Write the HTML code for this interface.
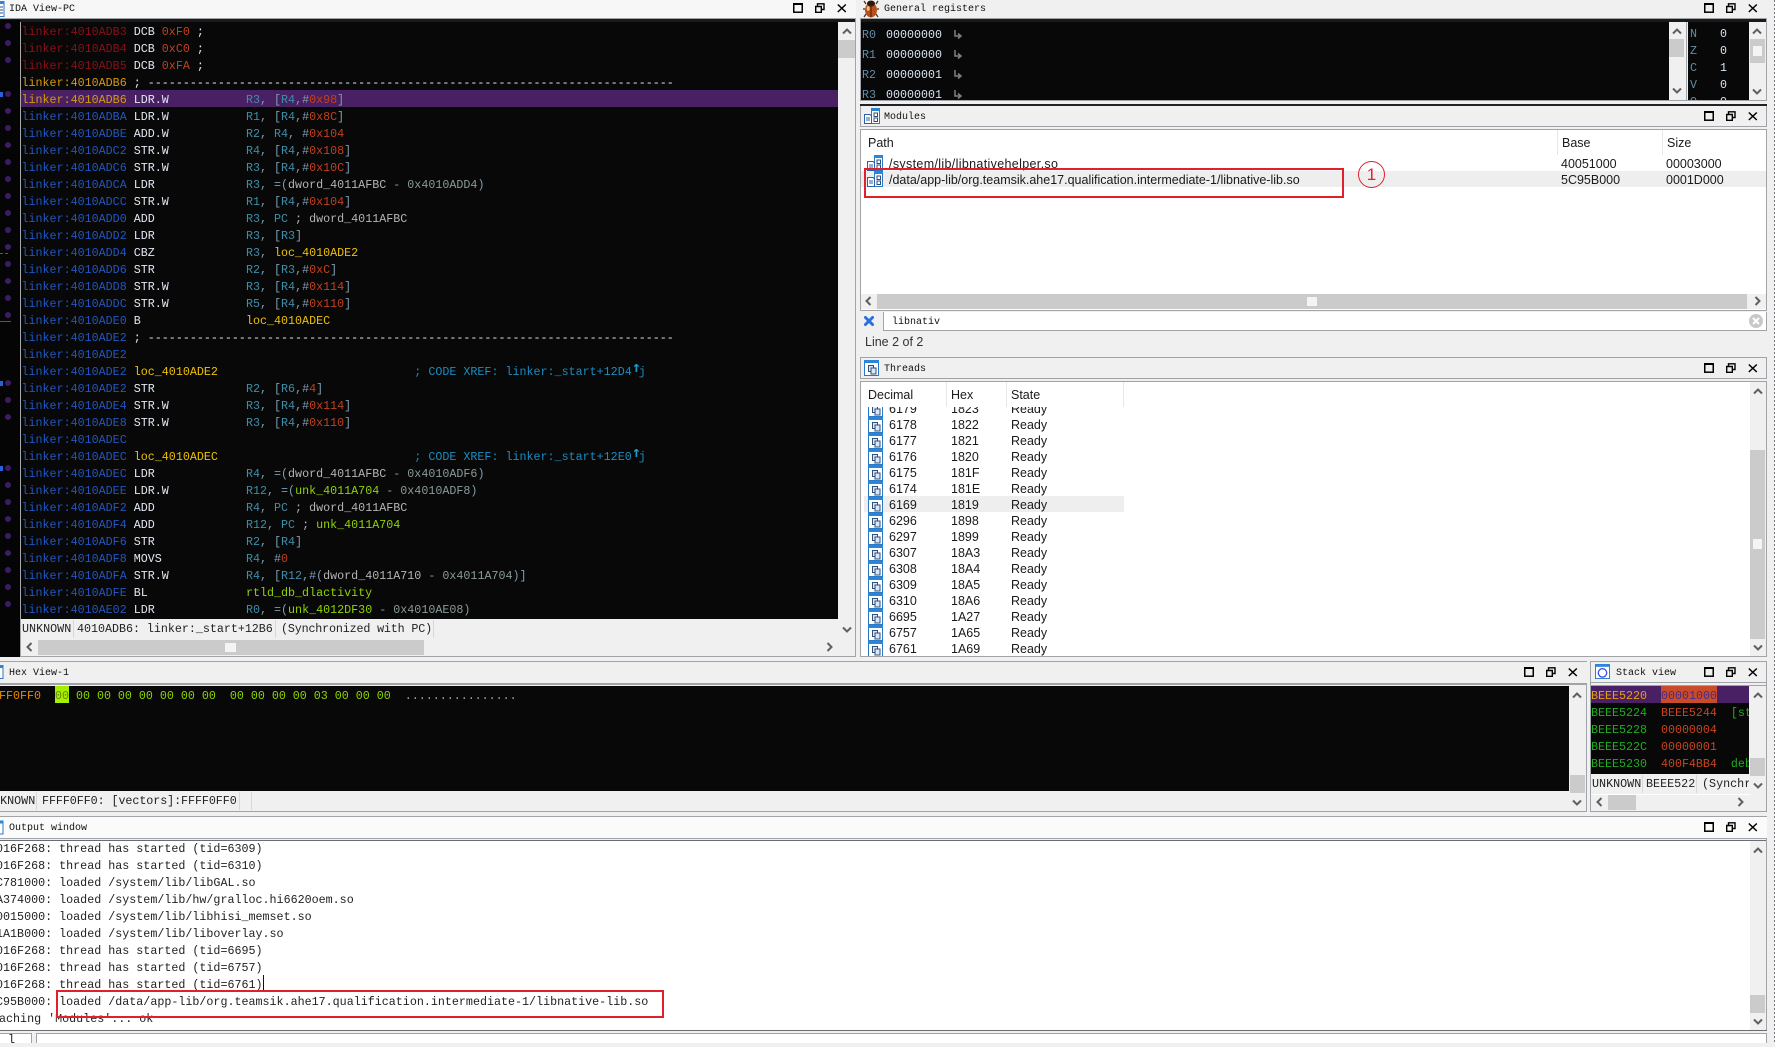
<!DOCTYPE html>
<html><head><meta charset="utf-8"><title>IDA</title>
<style>
html,body{margin:0;padding:0}
body{width:1775px;height:1042px;position:relative;overflow:hidden;background:#f0f0f0;font-family:"Liberation Mono",monospace;font-size:11.67px;color:#111}
.p{position:absolute;display:block}
.k{background:#080808}
.w{background:#fff}
.t{font-size:10px;line-height:12px;white-space:pre;color:#111}
.mono{white-space:pre;line-height:17px}
.lst{color:#e2e8f2;font-size:11.69px}
.lst div{height:17px;white-space:pre;line-height:17px}
i{font-style:normal}
.a{color:#2256c0}.ar{color:#8a1018}.ay{color:#d89a0c}.g{color:#3d8ea8}.b{color:#7f9bb0}.n{color:#c2401e}.l{color:#eec000}.c{color:#1c8cc0}.d{color:#b4b4b4}.u{color:#8fd400}.e{color:#8a9a9a}
.up{display:inline-block;width:7px;line-height:0;font-size:15px;font-family:"DejaVu Sans Mono",monospace;font-weight:bold;position:relative;top:-3px;color:#1c9cd0}
.s{font-family:"Liberation Sans",sans-serif;font-size:12.5px;line-height:16px;white-space:pre;color:#1a1a1a}
.st{line-height:20px;white-space:pre;color:#222;font-size:11.72px}
.ln{background:#a0a4a8}
.dot{position:absolute;width:6px;height:6px;border-radius:3px;background:#3c1c64;left:5px}
.tr{position:relative;height:16px}
.tr svg{position:absolute;left:4px;top:0;width:16px;height:16px}
.tr span{position:absolute;top:0}
.tr span:nth-of-type(1){left:25px}.tr span:nth-of-type(2){left:87px}.tr span:nth-of-type(3){left:147px}
.o{font-size:11.7px}
.o div{height:17px;line-height:17px;white-space:pre;color:#222}
svg.p{overflow:visible}
</style></head>
<body>
<svg width="0" height="0" style="position:absolute">
<defs>
<symbol id="btn" viewBox="0 0 56 10"><rect x=".75" y="1" width="8.5" height="8.2" fill="none" stroke="#000" stroke-width="1.5"/><rect x="0" y="0" width="10" height="2" fill="#000"/><path d="M24.5 3V.8H31V6.5H29M22.7 3.5H28.3V9.3H22.7Z" fill="none" stroke="#000" stroke-width="1.4"/><path d="M44.8 1.5L52.8 9M52.8 1.5L44.8 9" stroke="#000" stroke-width="1.5" fill="none"/></symbol>
<symbol id="up" viewBox="0 0 10 8"><path d="M1 6.5L5 2.5L9 6.5" fill="none" stroke="#606060" stroke-width="2"/></symbol>
<symbol id="dn" viewBox="0 0 10 8"><path d="M1 1.5L5 5.5L9 1.5" fill="none" stroke="#606060" stroke-width="2"/></symbol>
<symbol id="lf" viewBox="0 0 8 10"><path d="M6.5 1L2.5 5L6.5 9" fill="none" stroke="#606060" stroke-width="2"/></symbol>
<symbol id="rt" viewBox="0 0 8 10"><path d="M1.5 1L5.5 5L1.5 9" fill="none" stroke="#606060" stroke-width="2"/></symbol>
<symbol id="th" viewBox="0 0 16 16"><rect x=".5" y=".5" width="14" height="15" fill="#fff" stroke="#2a78c8"/><rect x="0" y="0" width="15" height="3" fill="#2a86d8"/><rect x="4.5" y="5.5" width="5" height="6" fill="#dce8f4" stroke="#2c4f80"/><rect x="7" y="8" width="5" height="6" fill="#dce8f4" stroke="#2c4f80"/></symbol>
<symbol id="mo" viewBox="0 0 16 16"><rect x="7.5" y=".5" width="8" height="15" fill="#fff" stroke="#2a78c8"/><rect x="7" y="0" width="9" height="3" fill="#2a86d8"/><rect x="10" y="5" width="3.5" height="3.5" fill="#fff" stroke="#2c4f80"/><rect x="10" y="10" width="3.5" height="3.5" fill="#fff" stroke="#2c4f80"/><path d="M.5 6.5H6L7.5 8V15.5H.5Z" fill="#fff" stroke="#2a60a8"/><path d="M2 10H6M2 12H6" stroke="#2a60a8"/></symbol>
</defs></svg>

<!-- IDA title -->
<div class="p" style="left:0;top:0;width:856px;height:18px;background:#f7f7f7"></div>
<svg class="p" viewBox="0 0 5 16" style="left:0;top:1px;width:5px;height:16px"><rect x="-8" y=".5" width="12" height="15" fill="#fff" stroke="#2a78c8"/><rect x="-8" y="0" width="12" height="3" fill="#2a86d8"/><path d="M0 6H3M0 9H3M0 12H3" stroke="#2c4f80"/></svg>
<div class="p t" style="left:9px;top:4px">IDA View-PC</div>
<svg class="p" style="left:793px;top:3px;width:56px;height:10px"><use href="#btn"/></svg>
<div class="p ln" style="left:0;top:18px;width:856px;height:1px"></div>
<div class="p" style="left:0;top:19px;width:856px;height:3px;background:#1a1a1a"></div>

<!-- Gutter -->
<div class="p" style="left:0;top:20px;width:20px;height:637px;background:#050505"></div>
<div class="p" style="left:20px;top:22px;width:1px;height:635px;background:#a8a8a8"></div>
<div class="dot" style="top:23px"></div><div class="dot" style="top:40px"></div><div class="dot" style="top:57px"></div>
<div class="dot" style="top:91px"></div><div class="dot" style="top:108px"></div><div class="dot" style="top:125px"></div><div class="dot" style="top:142px"></div><div class="dot" style="top:159px"></div><div class="dot" style="top:176px"></div><div class="dot" style="top:193px"></div><div class="dot" style="top:210px"></div><div class="dot" style="top:227px"></div><div class="dot" style="top:244px"></div><div class="dot" style="top:261px"></div><div class="dot" style="top:278px"></div><div class="dot" style="top:295px"></div><div class="dot" style="top:312px"></div>
<div class="dot" style="top:380px"></div><div class="dot" style="top:397px"></div><div class="dot" style="top:414px"></div>
<div class="dot" style="top:465px"></div><div class="dot" style="top:482px"></div><div class="dot" style="top:499px"></div><div class="dot" style="top:516px"></div><div class="dot" style="top:533px"></div><div class="dot" style="top:550px"></div><div class="dot" style="top:567px"></div><div class="dot" style="top:584px"></div><div class="dot" style="top:601px"></div>
<div class="p" style="left:0;top:92px;width:3px;height:5px;background:#2860e0"></div>
<div class="p" style="left:0;top:381px;width:3px;height:5px;background:#2860e0"></div>
<div class="p" style="left:0;top:466px;width:3px;height:5px;background:#2860e0"></div>
<div class="p" style="left:0;top:253px;width:10px;height:1px;background:repeating-linear-gradient(90deg,#2060c0 0 3px,transparent 3px 5px)"></div>
<div class="p" style="left:0;top:321px;width:11px;height:1px;background:#2060c0"></div>

<!-- Listing -->
<div class="p k" style="left:21px;top:22px;width:817px;height:597px"></div>
<div class="p" style="left:21px;top:90px;width:817px;height:17px;background:#4a2064"></div>
<div class="p lst" style="left:21.5px;top:24px;width:816px;height:595px;overflow:hidden">
<div><i class="ar">linker:4010ADB3</i> DCB <i class="n">0xF0</i> ;</div>
<div><i class="ar">linker:4010ADB4</i> DCB <i class="n">0xC0</i> ;</div>
<div><i class="ar">linker:4010ADB5</i> DCB <i class="n">0xFA</i> ;</div>
<div><i class="ay">linker:4010ADB6</i> ; ---------------------------------------------------------------------------</div>
<div><i class="ay">linker:4010ADB6</i> LDR.W           <i class="g">R3</i><i class="b">, [</i><i class="g">R4</i><i class="b">,#</i><i class="n">0x98</i><i class="b">]</i></div>
<div><i class="a">linker:4010ADBA</i> LDR.W           <i class="g">R1</i><i class="b">, [</i><i class="g">R4</i><i class="b">,#</i><i class="n">0x8C</i><i class="b">]</i></div>
<div><i class="a">linker:4010ADBE</i> ADD.W           <i class="g">R2</i><i class="b">, </i><i class="g">R4</i><i class="b">, #</i><i class="n">0x104</i></div>
<div><i class="a">linker:4010ADC2</i> STR.W           <i class="g">R4</i><i class="b">, [</i><i class="g">R4</i><i class="b">,#</i><i class="n">0x108</i><i class="b">]</i></div>
<div><i class="a">linker:4010ADC6</i> STR.W           <i class="g">R3</i><i class="b">, [</i><i class="g">R4</i><i class="b">,#</i><i class="n">0x10C</i><i class="b">]</i></div>
<div><i class="a">linker:4010ADCA</i> LDR             <i class="g">R3</i><i class="b">, =(</i><i class="d">dword_4011AFBC</i><i class="b"> - </i><i class="e">0x4010ADD4</i><i class="b">)</i></div>
<div><i class="a">linker:4010ADCC</i> STR.W           <i class="g">R1</i><i class="b">, [</i><i class="g">R4</i><i class="b">,#</i><i class="n">0x104</i><i class="b">]</i></div>
<div><i class="a">linker:4010ADD0</i> ADD             <i class="g">R3</i><i class="b">, </i><i class="g">PC</i><i class="d"> ; dword_4011AFBC</i></div>
<div><i class="a">linker:4010ADD2</i> LDR             <i class="g">R3</i><i class="b">, [</i><i class="g">R3</i><i class="b">]</i></div>
<div><i class="a">linker:4010ADD4</i> CBZ             <i class="g">R3</i><i class="b">, </i><i class="l">loc_4010ADE2</i></div>
<div><i class="a">linker:4010ADD6</i> STR             <i class="g">R2</i><i class="b">, [</i><i class="g">R3</i><i class="b">,#</i><i class="n">0xC</i><i class="b">]</i></div>
<div><i class="a">linker:4010ADD8</i> STR.W           <i class="g">R3</i><i class="b">, [</i><i class="g">R4</i><i class="b">,#</i><i class="n">0x114</i><i class="b">]</i></div>
<div><i class="a">linker:4010ADDC</i> STR.W           <i class="g">R5</i><i class="b">, [</i><i class="g">R4</i><i class="b">,#</i><i class="n">0x110</i><i class="b">]</i></div>
<div><i class="a">linker:4010ADE0</i> B               <i class="l">loc_4010ADEC</i></div>
<div><i class="a">linker:4010ADE2</i> ; ---------------------------------------------------------------------------</div>
<div><i class="a">linker:4010ADE2</i></div>
<div><i class="a">linker:4010ADE2</i> <i class="l">loc_4010ADE2</i>                            <i class="c">; CODE XREF: linker:_start+12D4</i><i class="up">↑</i><i class="c">j</i></div>
<div><i class="a">linker:4010ADE2</i> STR             <i class="g">R2</i><i class="b">, [</i><i class="g">R6</i><i class="b">,#</i><i class="n">4</i><i class="b">]</i></div>
<div><i class="a">linker:4010ADE4</i> STR.W           <i class="g">R3</i><i class="b">, [</i><i class="g">R4</i><i class="b">,#</i><i class="n">0x114</i><i class="b">]</i></div>
<div><i class="a">linker:4010ADE8</i> STR.W           <i class="g">R3</i><i class="b">, [</i><i class="g">R4</i><i class="b">,#</i><i class="n">0x110</i><i class="b">]</i></div>
<div><i class="a">linker:4010ADEC</i></div>
<div><i class="a">linker:4010ADEC</i> <i class="l">loc_4010ADEC</i>                            <i class="c">; CODE XREF: linker:_start+12E0</i><i class="up">↑</i><i class="c">j</i></div>
<div><i class="a">linker:4010ADEC</i> LDR             <i class="g">R4</i><i class="b">, =(</i><i class="d">dword_4011AFBC</i><i class="b"> - </i><i class="e">0x4010ADF6</i><i class="b">)</i></div>
<div><i class="a">linker:4010ADEE</i> LDR.W           <i class="g">R12</i><i class="b">, =(</i><i class="u">unk_4011A704</i><i class="b"> - </i><i class="e">0x4010ADF8</i><i class="b">)</i></div>
<div><i class="a">linker:4010ADF2</i> ADD             <i class="g">R4</i><i class="b">, </i><i class="g">PC</i><i class="d"> ; dword_4011AFBC</i></div>
<div><i class="a">linker:4010ADF4</i> ADD             <i class="g">R12</i><i class="b">, </i><i class="g">PC</i><i class="d"> ; </i><i class="u">unk_4011A704</i></div>
<div><i class="a">linker:4010ADF6</i> STR             <i class="g">R2</i><i class="b">, [</i><i class="g">R4</i><i class="b">]</i></div>
<div><i class="a">linker:4010ADF8</i> MOVS            <i class="g">R4</i><i class="b">, #</i><i class="n">0</i></div>
<div><i class="a">linker:4010ADFA</i> STR.W           <i class="g">R4</i><i class="b">, [</i><i class="g">R12</i><i class="b">,#(</i><i class="d">dword_4011A710</i><i class="b"> - </i><i class="e">0x4011A704</i><i class="b">)]</i></div>
<div><i class="a">linker:4010ADFE</i> BL              <i class="u">rtld_db_dlactivity</i></div>
<div><i class="a">linker:4010AE02</i> LDR             <i class="g">R0</i><i class="b">, =(</i><i class="u">unk_4012DF30</i><i class="b"> - </i><i class="e">0x4010AE08</i><i class="b">)</i></div>
</div>

<!-- IDA scrollbar -->
<div class="p" style="left:838px;top:22px;width:17px;height:617px;background:#f0f0f0"></div>
<svg class="p" style="left:842px;top:27px;width:10px;height:8px"><use href="#up"/></svg>
<div class="p" style="left:838px;top:40px;width:17px;height:18px;background:#cbcbcb"></div>
<svg class="p" style="left:842px;top:626px;width:10px;height:8px"><use href="#dn"/></svg>
<!-- IDA status -->
<div class="p st" style="left:22px;top:619px;height:20px">UNKNOWN</div>
<div class="p" style="left:73px;top:620px;width:1px;height:18px;background:#d8d8d8"></div>
<div class="p st" style="left:77px;top:619px;letter-spacing:-.04px">4010ADB6: linker:_start+12B6</div>
<div class="p" style="left:275px;top:620px;width:1px;height:18px;background:#d8d8d8"></div>
<div class="p st" style="left:281px;top:619px;letter-spacing:-.17px">(Synchronized with PC)</div>
<div class="p" style="left:433px;top:620px;width:1px;height:18px;background:#d8d8d8"></div>
<!-- IDA h-scroll -->
<div class="p" style="left:38px;top:640px;width:386px;height:15px;background:#cbcbcb"></div>
<div class="p" style="left:225px;top:643px;width:11px;height:9px;background:#f4f4f4"></div>
<svg class="p" style="left:25px;top:642px;width:8px;height:10px"><use href="#lf"/></svg>
<svg class="p" style="left:826px;top:642px;width:8px;height:10px"><use href="#rt"/></svg>
<div class="p ln" style="left:21px;top:656px;width:835px;height:1px"></div>
<div class="p ln" style="left:855px;top:18px;width:1px;height:639px"></div>

<!-- Hex View -->
<div class="p ln" style="left:0;top:661px;width:1587px;height:1px"></div>
<svg class="p" viewBox="0 0 4 14" style="left:0;top:665px;width:4px;height:14px"><rect x="-8" y=".5" width="11" height="13" fill="#fff" stroke="#2a78c8"/><rect x="-8" y="0" width="11" height="3" fill="#2a86d8"/></svg>
<div class="p t" style="left:9px;top:668px">Hex View-1</div>
<svg class="p" style="left:1524px;top:667px;width:56px;height:10px"><use href="#btn"/></svg>
<div class="p ln" style="left:0;top:683px;width:1587px;height:2px"></div>
<div class="p k" style="left:0;top:686px;width:1569px;height:105px"></div>
<div class="p" style="left:55px;top:686px;width:14px;height:17px;background:#a4f000"></div>
<div class="p mono" style="left:-15px;top:688px;color:#8fd400"><i style="color:#e48a00">FFFF0FF0</i>  <i style="color:#6a8a00">00</i> 00 00 00 00 00 00 00  00 00 00 00 03 00 00 00  <i style="color:#a0a8a8">................</i></div>
<div class="p" style="left:1569px;top:686px;width:16px;height:125px;background:#f0f0f0"></div>
<svg class="p" style="left:1572px;top:691px;width:10px;height:8px"><use href="#up"/></svg>
<div class="p" style="left:1570px;top:775px;width:15px;height:18px;background:#cbcbcb"></div>
<svg class="p" style="left:1572px;top:799px;width:10px;height:8px"><use href="#dn"/></svg>
<div class="p st" style="left:-14px;top:791px">UNKNOWN</div>
<div class="p" style="left:36px;top:792px;width:1px;height:18px;background:#d8d8d8"></div>
<div class="p st" style="left:42px;top:791px;letter-spacing:-.08px">FFFF0FF0: [vectors]:FFFF0FF0</div>
<div class="p" style="left:239px;top:792px;width:1px;height:18px;background:#d8d8d8"></div>
<div class="p" style="left:251px;top:792px;width:1px;height:18px;background:#d8d8d8"></div>
<div class="p ln" style="left:0;top:811px;width:1587px;height:1px"></div>
<div class="p ln" style="left:1586px;top:685px;width:1px;height:127px"></div>

<!-- Stack view -->
<div class="p ln" style="left:1590px;top:661px;width:177px;height:1px"></div>
<div class="p ln" style="left:1590px;top:661px;width:1px;height:151px"></div>
<div class="p ln" style="left:1766px;top:661px;width:1px;height:151px"></div>
<svg class="p" viewBox="0 0 16 16" style="left:1595px;top:664px;width:15px;height:15px"><rect x=".5" y=".5" width="15" height="15" fill="#fff" stroke="#2a78c8"/><rect x="0" y="0" width="16" height="3" fill="#2a86d8"/><circle cx="8" cy="9.5" r="4.5" fill="#fff" stroke="#3a50e8" stroke-width="1.4"/></svg>
<div class="p t" style="left:1616px;top:668px">Stack view</div>
<svg class="p" style="left:1704px;top:667px;width:56px;height:10px"><use href="#btn"/></svg>
<div class="p ln" style="left:1590px;top:682px;width:177px;height:1px"></div>
<div class="p ln" style="left:1590px;top:685px;width:177px;height:1px"></div>
<div class="p k" style="left:1591px;top:686px;width:158px;height:88px"></div>
<div class="p" style="left:1591px;top:686px;width:158px;height:17px;background:#4a2064"></div>
<div class="p" style="left:1661px;top:686px;width:56px;height:17px;background:#c84c2c"></div>
<div class="p mono" style="left:1591px;top:688px;width:158px;height:86px;overflow:hidden;color:#1fae1f"><i style="color:#e8a010">BEEE5220</i>  <i style="color:#4a2a80">00001000</i>
BEEE5224  <i style="color:#c8451f">BEEE5244</i>  [stack]
BEEE5228  <i style="color:#c8451f">00000004</i>
BEEE522C  <i style="color:#c8451f">00000001</i>
BEEE5230  <i style="color:#c8451f">400F4BB4</i>  debug</div>
<div class="p" style="left:1750px;top:686px;width:16px;height:124px;background:#f0f0f0"></div>
<svg class="p" style="left:1753px;top:691px;width:10px;height:8px"><use href="#up"/></svg>
<div class="p" style="left:1750px;top:758px;width:15px;height:18px;background:#cbcbcb"></div>
<svg class="p" style="left:1753px;top:782px;width:10px;height:8px"><use href="#dn"/></svg>
<div class="p st" style="left:1592px;top:774px">UNKNOWN</div>
<div class="p" style="left:1642px;top:775px;width:1px;height:18px;background:#d8d8d8"></div>
<div class="p st" style="left:1646px;top:774px">BEEE522</div>
<div class="p" style="left:1696px;top:775px;width:1px;height:18px;background:#d8d8d8"></div>
<div class="p st" style="left:1702px;top:774px;width:47px;overflow:hidden">(Synchr</div>
<div class="p w" style="left:1591px;top:794px;width:159px;height:1px"></div>
<div class="p" style="left:1608px;top:795px;width:28px;height:15px;background:#cbcbcb"></div>
<svg class="p" style="left:1595px;top:797px;width:8px;height:10px"><use href="#lf"/></svg>
<svg class="p" style="left:1737px;top:797px;width:8px;height:10px"><use href="#rt"/></svg>
<div class="p ln" style="left:1590px;top:811px;width:177px;height:1px"></div>

<!-- Output -->
<div class="p ln" style="left:0;top:816px;width:1767px;height:1px"></div>
<div class="p" style="left:0;top:817px;width:1767px;height:21px;background:#fbfbfb"></div>
<svg class="p" viewBox="0 0 4 14" style="left:0;top:820px;width:4px;height:15px"><rect x="-8" y=".5" width="11" height="13" fill="#fff" stroke="#2a78c8"/><rect x="-8" y="0" width="11" height="3" fill="#2a86d8"/></svg>
<div class="p t" style="left:9px;top:823px">Output window</div>
<svg class="p" style="left:1704px;top:822px;width:56px;height:10px"><use href="#btn"/></svg>
<div class="p ln" style="left:0;top:838px;width:1767px;height:1px"></div>
<div class="p" style="left:0;top:840px;width:1767px;height:1px;background:#6a6e72"></div>
<div class="p w" style="left:0;top:841px;width:1750px;height:189px"></div>
<div class="p o" style="left:0;top:841px;width:1750px;height:189px;overflow:hidden">
<div style="margin-left:-11px">4016F268: thread has started (tid=6309)</div>
<div style="margin-left:-11px">4016F268: thread has started (tid=6310)</div>
<div style="margin-left:-11px">5C781000: loaded /system/lib/libGAL.so</div>
<div style="margin-left:-11px">5A374000: loaded /system/lib/hw/gralloc.hi6620oem.so</div>
<div style="margin-left:-11px">40015000: loaded /system/lib/libhisi_memset.so</div>
<div style="margin-left:-11px">41A1B000: loaded /system/lib/liboverlay.so</div>
<div style="margin-left:-11px">4016F268: thread has started (tid=6695)</div>
<div style="margin-left:-11px">4016F268: thread has started (tid=6757)</div>
<div style="margin-left:-11px">4016F268: thread has started (tid=6761)</div>
<div style="margin-left:-11px">5C95B000: loaded /data/app-lib/org.teamsik.ahe17.qualification.intermediate-1/libnative-lib.so</div>
<div style="margin-left:-8px">Caching 'Modules'... ok</div>
</div>
<div class="p" style="left:263px;top:975px;width:1px;height:17px;background:#111"></div>
<div class="p" style="left:56px;top:990px;width:604px;height:24px;border:2px solid #e0202c"></div>
<div class="p" style="left:1750px;top:841px;width:16px;height:189px;background:#f0f0f0"></div>
<svg class="p" style="left:1753px;top:846px;width:10px;height:8px"><use href="#up"/></svg>
<div class="p" style="left:1750px;top:995px;width:15px;height:18px;background:#cbcbcb"></div>
<svg class="p" style="left:1753px;top:1018px;width:10px;height:8px"><use href="#dn"/></svg>
<div class="p ln" style="left:1766px;top:838px;width:1px;height:192px"></div>
<div class="p" style="left:0;top:1030px;width:1767px;height:1px;background:#6a6e72"></div>
<!-- Input -->
<div class="p w" style="left:0;top:1033px;width:31px;height:9px;border-right:1px solid #a0a4a8;border-top:1px solid #a0a4a8"></div>
<div class="p st" style="left:8px;top:1034px;line-height:12px">l</div>
<div class="p w" style="left:36px;top:1033px;width:1729px;height:9px;border:1px solid #a0a4a8;border-bottom:0"></div>

<!-- General registers -->
<svg class="p" viewBox="0 0 16 18" style="left:863px;top:0;width:16px;height:18px"><path d="M3 4L1 1M13 4L15 1M2 9H0M14 9H16M3 14L1 17M13 14L15 17" stroke="#4a2a10" stroke-width="1.2" fill="none"/><ellipse cx="8" cy="10" rx="6" ry="7.5" fill="#b8501c"/><ellipse cx="8" cy="3.5" rx="4" ry="3" fill="#2a1a10"/><path d="M8 4V17" stroke="#4a1a08"/><ellipse cx="5.2" cy="8.5" rx="1.5" ry="2.5" fill="#f0c080"/></svg>
<div class="p t" style="left:884px;top:4px">General registers</div>
<svg class="p" style="left:1704px;top:3px;width:56px;height:10px"><use href="#btn"/></svg>
<div class="p ln" style="left:860px;top:18px;width:907px;height:1px"></div>
<div class="p" style="left:860px;top:19px;width:907px;height:3px;background:#1a1a1a"></div>
<div class="p k" style="left:861px;top:22px;width:808px;height:78px"></div>
<div class="p" style="left:1669px;top:22px;width:17px;height:78px;background:#f0f0f0"></div>
<svg class="p" style="left:1672px;top:27px;width:10px;height:8px"><use href="#up"/></svg>
<div class="p" style="left:1669px;top:39px;width:15px;height:18px;background:#cbcbcb"></div>
<svg class="p" style="left:1672px;top:87px;width:10px;height:8px"><use href="#dn"/></svg>
<div class="p" style="left:1686px;top:22px;width:1px;height:78px;background:#a0a4a8"></div>
<div class="p k" style="left:1688px;top:22px;width:61px;height:78px"></div>
<div class="p" style="left:1749px;top:22px;width:17px;height:78px;background:#f0f0f0"></div>
<svg class="p" style="left:1752px;top:27px;width:10px;height:8px"><use href="#up"/></svg>
<div class="p" style="left:1750px;top:39px;width:15px;height:24px;background:#cbcbcb"></div>
<div class="p" style="left:1753px;top:46px;width:9px;height:10px;background:#f4f4f4"></div>
<svg class="p" style="left:1752px;top:88px;width:10px;height:8px"><use href="#dn"/></svg>
<div class="p" style="left:862px;top:22px;width:120px;height:78px;overflow:hidden;color:#d8e4f0;white-space:pre">
<div class="p" style="top:5px;line-height:17px"><i style="color:#5f8ea8">R0</i> <i style="margin-left:3px">00000000</i></div>
<div class="p" style="top:25px;line-height:17px"><i style="color:#5f8ea8">R1</i> <i style="margin-left:3px">00000000</i></div>
<div class="p" style="top:45px;line-height:17px"><i style="color:#5f8ea8">R2</i> <i style="margin-left:3px">00000001</i></div>
<div class="p" style="top:65px;line-height:17px"><i style="color:#5f8ea8">R3</i> <i style="margin-left:3px">00000001</i></div>
</div>
<svg class="p" viewBox="0 0 9 10" style="left:953px;top:30px;width:9px;height:10px"><path d="M2 0V6H7M5 3.5L8 6L5 8.5" fill="none" stroke="#808080" stroke-width="1.5"/></svg>
<svg class="p" viewBox="0 0 9 10" style="left:953px;top:50px;width:9px;height:10px"><path d="M2 0V6H7M5 3.5L8 6L5 8.5" fill="none" stroke="#808080" stroke-width="1.5"/></svg>
<svg class="p" viewBox="0 0 9 10" style="left:953px;top:70px;width:9px;height:10px"><path d="M2 0V6H7M5 3.5L8 6L5 8.5" fill="none" stroke="#808080" stroke-width="1.5"/></svg>
<svg class="p" viewBox="0 0 9 10" style="left:953px;top:90px;width:9px;height:10px"><path d="M2 0V6H7M5 3.5L8 6L5 8.5" fill="none" stroke="#808080" stroke-width="1.5"/></svg>
<div class="p" style="left:1688px;top:22px;width:61px;height:78px;overflow:hidden;color:#d8e4f0">
<div class="p" style="left:2px;top:4px;line-height:17px;color:#5f8ea8;white-space:pre">N
Z
C
V
Q</div>
<div class="p" style="left:32px;top:4px;line-height:17px;white-space:pre">0
0
1
0
0</div>
</div>
<div class="p ln" style="left:860px;top:100px;width:907px;height:1px"></div>
<div class="p" style="left:860px;top:104px;width:907px;height:2px;background:#222"></div>
<div class="p ln" style="left:860px;top:18px;width:1px;height:83px"></div>
<div class="p ln" style="left:1766px;top:18px;width:1px;height:83px"></div>

<!-- Modules -->
<svg class="p" style="left:864px;top:108px;width:16px;height:16px"><use href="#mo"/></svg>
<div class="p t" style="left:884px;top:112px">Modules</div>
<svg class="p" style="left:1704px;top:111px;width:56px;height:10px"><use href="#btn"/></svg>
<div class="p ln" style="left:860px;top:126px;width:907px;height:1px"></div>
<div class="p ln" style="left:860px;top:129px;width:907px;height:1px"></div>
<div class="p ln" style="left:860px;top:106px;width:1px;height:21px"></div>
<div class="p ln" style="left:1766px;top:106px;width:1px;height:21px"></div>
<div class="p w" style="left:861px;top:130px;width:905px;height:180px"></div>
<div class="p" style="left:1557px;top:130px;width:1px;height:25px;background:#e6e6e6"></div>
<div class="p" style="left:1662px;top:130px;width:1px;height:25px;background:#e6e6e6"></div>
<div class="p" style="left:861px;top:171px;width:905px;height:16px;background:#eeeeee"></div>
<div class="p s" style="left:868px;top:135px">Path</div>
<div class="p s" style="left:1562px;top:135px">Base</div>
<div class="p s" style="left:1667px;top:135px">Size</div>
<svg class="p" style="left:867px;top:155px;width:16px;height:16px"><use href="#mo"/></svg>
<svg class="p" style="left:867px;top:171px;width:16px;height:16px"><use href="#mo"/></svg>
<div class="p s" style="left:889px;top:156px;letter-spacing:.34px">/system/lib/libnativehelper.so</div>
<div class="p s" style="left:889px;top:172px">/data/app-lib/org.teamsik.ahe17.qualification.intermediate-1/libnative-lib.so</div>
<div class="p s" style="left:1561px;top:156px">40051000</div>
<div class="p s" style="left:1666px;top:156px">00003000</div>
<div class="p s" style="left:1561px;top:172px">5C95B000</div>
<div class="p s" style="left:1666px;top:172px">0001D000</div>
<div class="p" style="left:864px;top:168px;width:476px;height:26px;border:2px solid #e0202c"></div>
<div class="p" style="left:1358px;top:161px;width:25px;height:25px;border:1px solid #e0202c;border-radius:50%;text-align:center;line-height:25px;color:#e0202c;font-family:'Liberation Sans',sans-serif;font-size:17px">1</div>
<div class="p" style="left:861px;top:294px;width:905px;height:15px;background:#f0f0f0"></div>
<div class="p" style="left:877px;top:294px;width:870px;height:15px;background:#cbcbcb"></div>
<div class="p" style="left:1307px;top:297px;width:10px;height:9px;background:#f4f4f4"></div>
<svg class="p" style="left:864px;top:296px;width:8px;height:10px"><use href="#lf"/></svg>
<svg class="p" style="left:1754px;top:296px;width:8px;height:10px"><use href="#rt"/></svg>
<div class="p ln" style="left:860px;top:130px;width:1px;height:180px"></div>
<div class="p ln" style="left:1766px;top:130px;width:1px;height:180px"></div>
<div class="p ln" style="left:860px;top:310px;width:907px;height:1px"></div>
<!-- Filter -->
<svg class="p" viewBox="0 0 14 14" style="left:864px;top:316px;width:10px;height:10px"><path d="M2 2L12 12M12 2L2 12" stroke="#2a70e0" stroke-width="4" stroke-linecap="round"/></svg>
<div class="p w" style="left:883px;top:312px;width:882px;height:18px;border-bottom:1px solid #a0a4a8;border-left:1px solid #a0a4a8;border-right:1px solid #a0a4a8"></div>
<div class="p t" style="left:892px;top:317px">libnativ</div>
<svg class="p" viewBox="0 0 14 14" style="left:1749px;top:314px;width:14px;height:14px"><circle cx="7" cy="7" r="7" fill="#c8c8c8"/><path d="M4 4L10 10M10 4L4 10" stroke="#fff" stroke-width="2"/></svg>
<div class="p s" style="left:865px;top:334px;color:#333">Line 2 of 2</div>

<!-- Threads -->
<div class="p ln" style="left:860px;top:357px;width:907px;height:1px"></div>
<svg class="p" style="left:864px;top:360px;width:16px;height:16px"><use href="#th"/></svg>
<div class="p t" style="left:884px;top:364px">Threads</div>
<svg class="p" style="left:1704px;top:363px;width:56px;height:10px"><use href="#btn"/></svg>
<div class="p ln" style="left:860px;top:378px;width:907px;height:1px"></div>
<div class="p ln" style="left:860px;top:381px;width:907px;height:1px"></div>
<div class="p ln" style="left:860px;top:357px;width:1px;height:22px"></div>
<div class="p ln" style="left:1766px;top:357px;width:1px;height:22px"></div>
<div class="p w" style="left:861px;top:382px;width:905px;height:274px"></div>
<div class="p s" style="left:868px;top:387px">Decimal</div>
<div class="p s" style="left:951px;top:387px">Hex</div>
<div class="p s" style="left:1011px;top:387px">State</div>
<div class="p" style="left:946px;top:382px;width:1px;height:25px;background:#e6e6e6"></div>
<div class="p" style="left:1006px;top:382px;width:1px;height:25px;background:#e6e6e6"></div>
<div class="p" style="left:1123px;top:382px;width:1px;height:25px;background:#e6e6e6"></div>
<div class="p" style="left:864px;top:496px;width:260px;height:16px;background:#eeeeee"></div>
<div class="p s" style="left:864px;top:407px;width:260px;height:249px;overflow:hidden;line-height:16px;white-space:normal"><div style="margin-top:-6px"></div><div class="tr"><svg><use href="#th"/></svg><span>6179</span><span>1823</span><span>Ready</span></div><div class="tr"><svg><use href="#th"/></svg><span>6178</span><span>1822</span><span>Ready</span></div><div class="tr"><svg><use href="#th"/></svg><span>6177</span><span>1821</span><span>Ready</span></div><div class="tr"><svg><use href="#th"/></svg><span>6176</span><span>1820</span><span>Ready</span></div><div class="tr"><svg><use href="#th"/></svg><span>6175</span><span>181F</span><span>Ready</span></div><div class="tr"><svg><use href="#th"/></svg><span>6174</span><span>181E</span><span>Ready</span></div><div class="tr"><svg><use href="#th"/></svg><span>6169</span><span>1819</span><span>Ready</span></div><div class="tr"><svg><use href="#th"/></svg><span>6296</span><span>1898</span><span>Ready</span></div><div class="tr"><svg><use href="#th"/></svg><span>6297</span><span>1899</span><span>Ready</span></div><div class="tr"><svg><use href="#th"/></svg><span>6307</span><span>18A3</span><span>Ready</span></div><div class="tr"><svg><use href="#th"/></svg><span>6308</span><span>18A4</span><span>Ready</span></div><div class="tr"><svg><use href="#th"/></svg><span>6309</span><span>18A5</span><span>Ready</span></div><div class="tr"><svg><use href="#th"/></svg><span>6310</span><span>18A6</span><span>Ready</span></div><div class="tr"><svg><use href="#th"/></svg><span>6695</span><span>1A27</span><span>Ready</span></div><div class="tr"><svg><use href="#th"/></svg><span>6757</span><span>1A65</span><span>Ready</span></div><div class="tr"><svg><use href="#th"/></svg><span>6761</span><span>1A69</span><span>Ready</span></div></div>
<div class="p" style="left:1750px;top:382px;width:16px;height:274px;background:#f0f0f0"></div>
<svg class="p" style="left:1753px;top:387px;width:10px;height:8px"><use href="#up"/></svg>
<div class="p" style="left:1750px;top:450px;width:15px;height:189px;background:#cbcbcb"></div>
<div class="p" style="left:1753px;top:539px;width:9px;height:10px;background:#f4f4f4"></div>
<svg class="p" style="left:1753px;top:644px;width:10px;height:8px"><use href="#dn"/></svg>
<div class="p ln" style="left:860px;top:382px;width:1px;height:274px"></div>
<div class="p ln" style="left:1766px;top:382px;width:1px;height:274px"></div>
<div class="p ln" style="left:860px;top:656px;width:907px;height:1px"></div>

<!-- right dotted edge -->
<div class="p" style="left:1774px;top:0;width:1px;height:1042px;background:repeating-linear-gradient(180deg,#777 0 2px,transparent 2px 4px)"></div>
</body></html>
